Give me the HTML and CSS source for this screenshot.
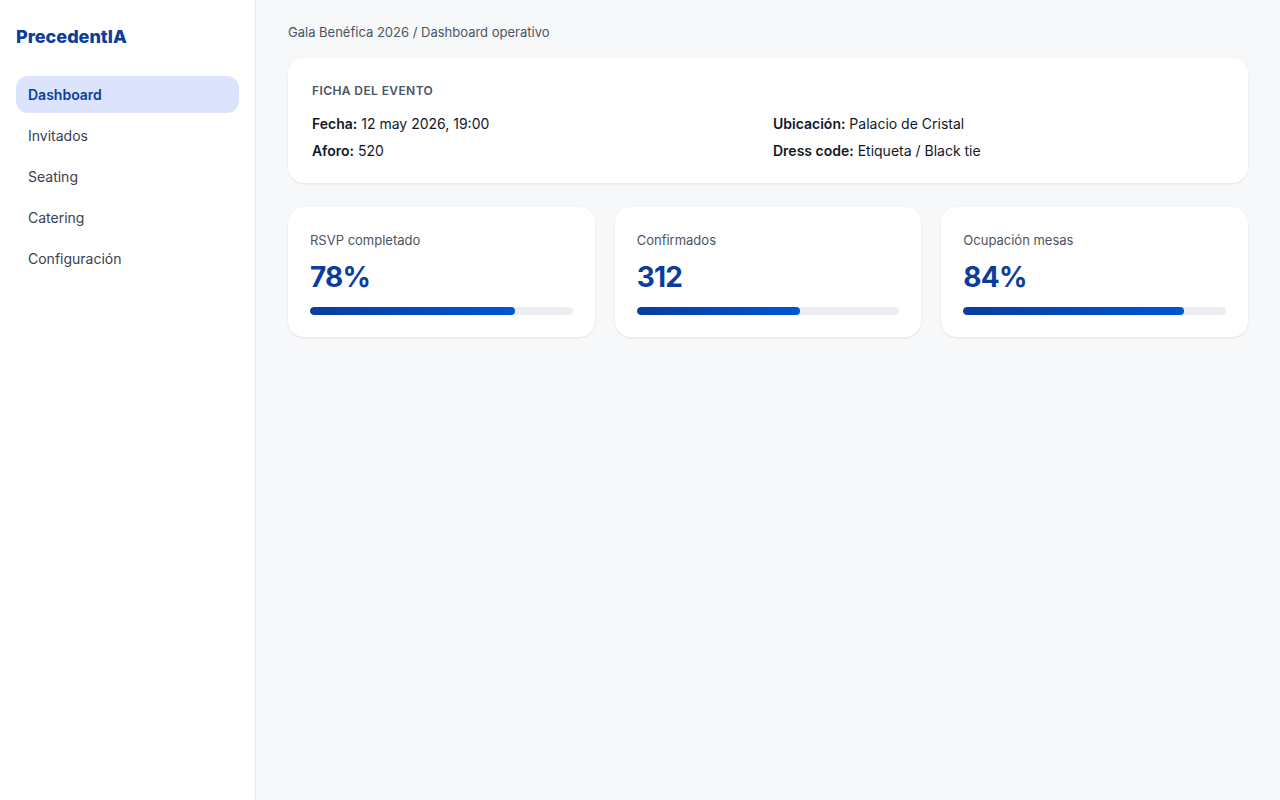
FILE: index.html
```html
<!DOCTYPE html>
<html lang="es">
  <head>
    <meta charset="UTF-8">
    <meta name="viewport" content="width=device-width, initial-scale=1">
    <title>PrecedentIA - Dashboard</title>
    <link rel="stylesheet" href="styles.css">
  </head>
  <body>

    <aside class="sidebar">
      <div class="brand">PrecedentIA</div>
      <nav class="nav">
        <a class="nav-item active" href="#">Dashboard</a>
        <a class="nav-item" href="#">Invitados</a>
        <a class="nav-item" href="#">Seating</a>
        <a class="nav-item" href="#">Catering</a>
        <a class="nav-item" href="#">Configuración</a>
      </nav>
    </aside>

    <main class="main">
      <div class="crumbs">Gala Benéfica 2026 / Dashboard operativo</div>

      <section class="card event">
        <h2 class="card-title">Ficha del evento</h2>
        <div class="event-grid">
          <p><b>Fecha:</b> 12 may 2026, 19:00</p>
          <p><b>Ubicación:</b> Palacio de Cristal</p>
          <p><b>Aforo:</b> 520</p>
          <p><b>Dress code:</b> Etiqueta / Black tie</p>
        </div>
      </section>

      <section class="stats">
        <div class="card stat">
          <div class="stat-label">RSVP completado</div>
          <div class="stat-value">78%</div>
          <div class="bar"><span style="width: 78%"></span></div>
        </div>
        <div class="card stat">
          <div class="stat-label">Confirmados</div>
          <div class="stat-value">312</div>
          <div class="bar"><span style="width: 62%"></span></div>
        </div>
        <div class="card stat">
          <div class="stat-label">Ocupación mesas</div>
          <div class="stat-value">84%</div>
          <div class="bar"><span style="width: 84%"></span></div>
        </div>
      </section>
    </main>

  </body>
</html>
```

FILE: styles.css
```css
:root {
  --clr-bg:       #f7f8fa;
  --clr-white:    #ffffff;
  --clr-line:     #e5e7eb;
  --clr-text:     #1f2937;
  --clr-muted:    #4b5563;
  --clr-brand:    #0b3d9c;
  --clr-active:   #dce4fd;
  --clr-track:    #eceef1;
}

*, *::before, *::after {
  box-sizing: border-box;
}

html, body {
  margin: 0;
  padding: 0;
  height: 100%;
}

body {
  display: flex;
  font: normal normal 14px/1.4 Inter, "Noto Sans", sans-serif;
  color: var(--clr-text);
  background: var(--clr-bg);
}

/* Sidebar
 *
 */

.sidebar {
  flex: 0 0 256px;
  padding: 24px 16px;
  background: var(--clr-white);
  border-right: solid 1px var(--clr-line);
}

.brand {
  height: 26px;
  line-height: 26px;
  font-size: 18px;
  font-weight: 800;
  color: var(--clr-brand);
}

.nav {
  display: flex;
  flex-direction: column;
  gap: 4px;
  margin-top: 26px;
}

.nav-item {
  display: block;
  height: 37px;
  line-height: 37px;
  padding: 0 12px;
  border-radius: 12px;
  font-size: 14px;
  color: #374151;
  text-decoration: none;
}

.nav-item.active {
  background: var(--clr-active);
  color: var(--clr-brand);
  font-weight: 600;
}

/* Main
 *
 */

.main {
  flex: 1;
  display: flex;
  flex-direction: column;
  gap: 24px;
  padding: 24px 32px;
}

.crumbs {
  height: 16px;
  line-height: 16px;
  margin-bottom: -6px;
  font-size: 13px;
  color: var(--clr-muted);
}

.card {
  background: var(--clr-white);
  border-radius: 16px;
  box-shadow: 0 1px 3px rgba(15, 23, 42, 0.06), 0 1px 2px rgba(15, 23, 42, 0.03);
}

.event {
  padding: 25px 24px 22px;
}

.card-title {
  margin: 0 0 15px;
  font-size: 12px;
  line-height: 16px;
  font-weight: 600;
  letter-spacing: 0.4px;
  text-transform: uppercase;
  color: var(--clr-muted);
}

.event-grid {
  display: grid;
  grid-template-columns: 1fr 1fr;
  gap: 7px 10px;
}

.event-grid p {
  margin: 0;
  line-height: 20px;
  font-size: 14px;
  color: #111827;
}

.event-grid b {
  font-weight: 600;
}

.stats {
  display: grid;
  grid-template-columns: repeat(3, 1fr);
  gap: 20px;
}

.stat {
  height: 130px;
  padding: 25px 22px 22px;
}

.stat-label {
  font-size: 13px;
  line-height: 16px;
  color: var(--clr-muted);
}

.stat-value {
  margin-top: 12px;
  font-size: 28px;
  line-height: 34px;
  font-weight: 700;
  letter-spacing: -0.8px;
  color: var(--clr-brand);
}

.bar {
  margin-top: 13px;
  height: 8px;
  border-radius: 4px;
  background: var(--clr-track);
  overflow: hidden;
}

.bar span {
  display: block;
  height: 100%;
  border-radius: 4px;
  background: linear-gradient(to right, #0a3d9e, #0056d6);
}
```
